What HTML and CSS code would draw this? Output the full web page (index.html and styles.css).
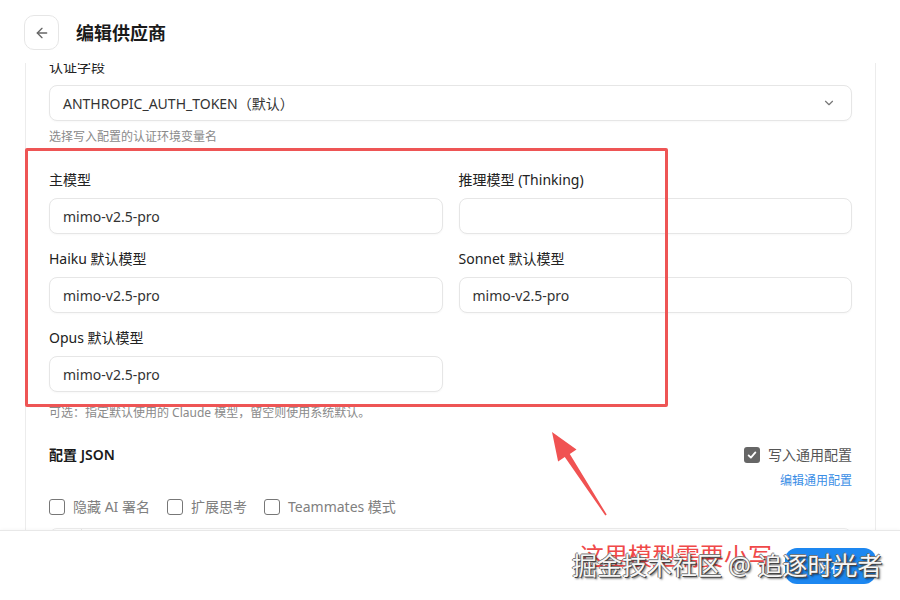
FILE: index.html
```html
<!DOCTYPE html>
<html lang="zh-CN">
<head>
    <meta charset="UTF-8">
    <meta name="viewport" content="width=device-width, initial-scale=1.0">
    <title>编辑供应商</title>
    <link rel="stylesheet" href="styles.css">
</head>
<body>
    <div class="page">
        <header class="topbar">
            <button class="back-btn" type="button" aria-label="返回">
                <svg width="16" height="16" viewBox="0 0 24 24" fill="none" stroke="currentColor" stroke-width="2" stroke-linecap="round" stroke-linejoin="round">
                    <path d="M19 12H5"/>
                    <path d="M12 19l-7-7 7-7"/>
                </svg>
            </button>
            <h1>编辑供应商</h1>
        </header>

        <main class="content">
            <div class="panel">
                <div class="panel-inner">
                    <div class="field">
                        <label class="field-label">认证字段</label>
                        <div class="select">
                            <span>ANTHROPIC_AUTH_TOKEN（默认）</span>
                            <svg width="14" height="14" viewBox="0 0 24 24" fill="none" stroke="currentColor" stroke-width="2" stroke-linecap="round" stroke-linejoin="round">
                                <path d="M6 9l6 6 6-6"/>
                            </svg>
                        </div>
                        <p class="hint">选择写入配置的认证环境变量名</p>
                    </div>

                    <div class="model-grid">
                        <div class="field">
                            <label class="field-label">主模型</label>
                            <input class="text-input" type="text" value="mimo-v2.5-pro">
                        </div>
                        <div class="field">
                            <label class="field-label">推理模型 (Thinking)</label>
                            <input class="text-input" type="text" value="">
                        </div>
                        <div class="field">
                            <label class="field-label">Haiku 默认模型</label>
                            <input class="text-input" type="text" value="mimo-v2.5-pro">
                        </div>
                        <div class="field">
                            <label class="field-label">Sonnet 默认模型</label>
                            <input class="text-input" type="text" value="mimo-v2.5-pro">
                        </div>
                        <div class="field">
                            <label class="field-label">Opus 默认模型</label>
                            <input class="text-input" type="text" value="mimo-v2.5-pro">
                        </div>
                    </div>
                    <p class="hint hint-models">可选：指定默认使用的 Claude 模型，留空则使用系统默认。</p>

                    <div class="json-head">
                        <span class="json-title">配置 JSON</span>
                        <div class="json-side">
                            <label class="check check-dark">
                                <span class="box checked">
                                    <svg width="12" height="12" viewBox="0 0 16 16" fill="none" stroke="#fff" stroke-width="2.4" stroke-linecap="round" stroke-linejoin="round">
                                        <path d="M3.5 8.5l3 3 6-7"/>
                                    </svg>
                                </span>
                                写入通用配置
                            </label>
                            <a class="link" href="#">编辑通用配置</a>
                        </div>
                    </div>

                    <div class="options">
                        <label class="check"><span class="box"></span>隐藏 AI 署名</label>
                        <label class="check"><span class="box"></span>扩展思考</label>
                        <label class="check"><span class="box"></span>Teammates 模式</label>
                    </div>

                    <div class="editor">
                        <div class="gutter"></div>
                    </div>
                </div>
            </div>
        </main>

        <footer class="bottombar">
            <button class="save-btn" type="button">保存</button>
        </footer>

        <!-- markup layer drawn on top of the form -->
        <div class="annotation">
            <div class="mark-box"></div>
            <svg class="mark-arrow" width="900" height="600" viewBox="0 0 900 600">
                <polygon points="552,432 576.5,449.5 569.8,453.9 606.7,514.6 605.3,515.4 564.8,457.1 558.1,461.5" fill="#f05252"/>
            </svg>
            <div class="mark-note">这里模型需要小写</div>
            <div class="watermark">掘金技术社区 @ 追逐时光者</div>
        </div>
    </div>
</body>
</html>
```

FILE: styles.css
```css
* {
    box-sizing: border-box;
}

body {
    margin: 0;
    font-family: "Noto Sans", "Noto Sans CJK SC", sans-serif;
    color: #222;
    background: #fff;
}

.page {
    position: relative;
    width: 900px;
    height: 600px;
    display: flex;
    flex-direction: column;
    overflow: hidden;
}

/* top bar */

.topbar {
    height: 63px;
    flex-shrink: 0;
    display: flex;
    align-items: center;
    gap: 17px;
    padding: 0 24px 0 24px;
}

.back-btn {
    width: 35px;
    height: 35px;
    border: 1px solid #e6e6e6;
    border-radius: 10px;
    background: #fff;
    color: #666;
    display: flex;
    align-items: center;
    justify-content: center;
    padding: 0;
    margin-top: 2px;
}

.topbar h1 {
    margin: 0;
    font-size: 18px;
    font-weight: 700;
    color: #1a1a1a;
    margin-top: 1px;
}

/* scrolling form */

.content {
    flex: 1;
    min-height: 0;
    display: flex;
}

.panel {
    flex: 1;
    margin: 0 24px 0 25px;
    border-left: 1px solid #ececec;
    border-right: 1px solid #ececec;
    padding: 0 23px;
    overflow: hidden;
}

.panel-inner {
    margin-top: -6px;
}

.field {
    display: flex;
    flex-direction: column;
    gap: 8px;
}

.field-label {
    font-size: 14px;
    line-height: 20px;
    color: #222;
}

.select,
.text-input {
    height: 36px;
    border: 1px solid #e6e6e6;
    border-radius: 8px;
    background: #fff;
    box-shadow: 0 1px 2px rgba(0, 0, 0, 0.03);
    padding: 0 13px;
    font-family: inherit;
    font-size: 14px;
    color: #333;
}

.select {
    display: flex;
    align-items: center;
    justify-content: space-between;
}

.select svg {
    color: #777;
    margin-right: 2px;
}

.text-input {
    width: 100%;
    outline: none;
}

.hint {
    margin: 0;
    font-size: 12px;
    line-height: 16px;
    color: #8a8a8a;
}

.model-grid {
    margin-top: 25px;
    display: grid;
    grid-template-columns: 1fr 1fr;
    column-gap: 16px;
    row-gap: 15px;
}

.hint-models {
    margin-top: 13px;
}

/* json section */

.json-head {
    margin-top: 24px;
    display: flex;
    justify-content: space-between;
    align-items: flex-start;
}

.json-title {
    font-size: 14px;
    line-height: 20px;
    font-weight: 600;
    color: #1a1a1a;
}

.json-side {
    display: flex;
    flex-direction: column;
    align-items: flex-end;
    gap: 8px;
}

.link {
    font-size: 12px;
    line-height: 16px;
    color: #3a8ee6;
    text-decoration: none;
}

.check {
    display: flex;
    align-items: center;
    gap: 8px;
    font-size: 14px;
    line-height: 20px;
    color: #808080;
}

.check-dark {
    color: #555;
}

.box {
    width: 16px;
    height: 16px;
    border: 1.5px solid #777;
    border-radius: 3px;
    display: flex;
    align-items: center;
    justify-content: center;
    flex-shrink: 0;
}

.box.checked {
    border: none;
    background: #666;
}

.options {
    margin-top: 8px;
    display: flex;
    gap: 17px;
}

.editor {
    margin-top: 11px;
    height: 200px;
    border: 1px solid #ececec;
    border-radius: 8px;
    display: flex;
}

.gutter {
    width: 32px;
    border-right: 1px solid #e6e6e6;
}

/* bottom bar */

.bottombar {
    height: 70px;
    flex-shrink: 0;
    border-top: 1px solid #e8e8e8;
    box-shadow: 0 -1px 3px rgba(0, 0, 0, 0.03);
    display: flex;
    align-items: center;
    justify-content: flex-end;
    padding-right: 24px;
    background: #fff;
}

.save-btn {
    width: 91px;
    height: 36px;
    border: none;
    border-radius: 12px;
    background: #1d87f0;
    color: #fff;
    font-family: inherit;
    font-size: 14px;
}

/* annotation layer */

.annotation {
    position: absolute;
    inset: 0;
    pointer-events: none;
}

.mark-box {
    position: absolute;
    left: 25px;
    top: 148px;
    width: 643px;
    height: 259px;
    border: 3px solid #ee5555;
    border-radius: 2px;
}

.mark-arrow {
    position: absolute;
    left: 0;
    top: 0;
}

.mark-note {
    position: absolute;
    left: 580px;
    top: 541px;
    font-size: 24px;
    line-height: 30px;
    color: #f04848;
    white-space: nowrap;
}

.watermark {
    position: absolute;
    left: 572px;
    top: 549px;
    font-size: 25px;
    line-height: 32px;
    color: #f7f7f7;
    white-space: nowrap;
    text-shadow: 1px 1px 0 #444, -1px 0 0 #777, 0 -1px 0 #777, 2px 2px 2px rgba(0, 0, 0, 0.5);
}
```
